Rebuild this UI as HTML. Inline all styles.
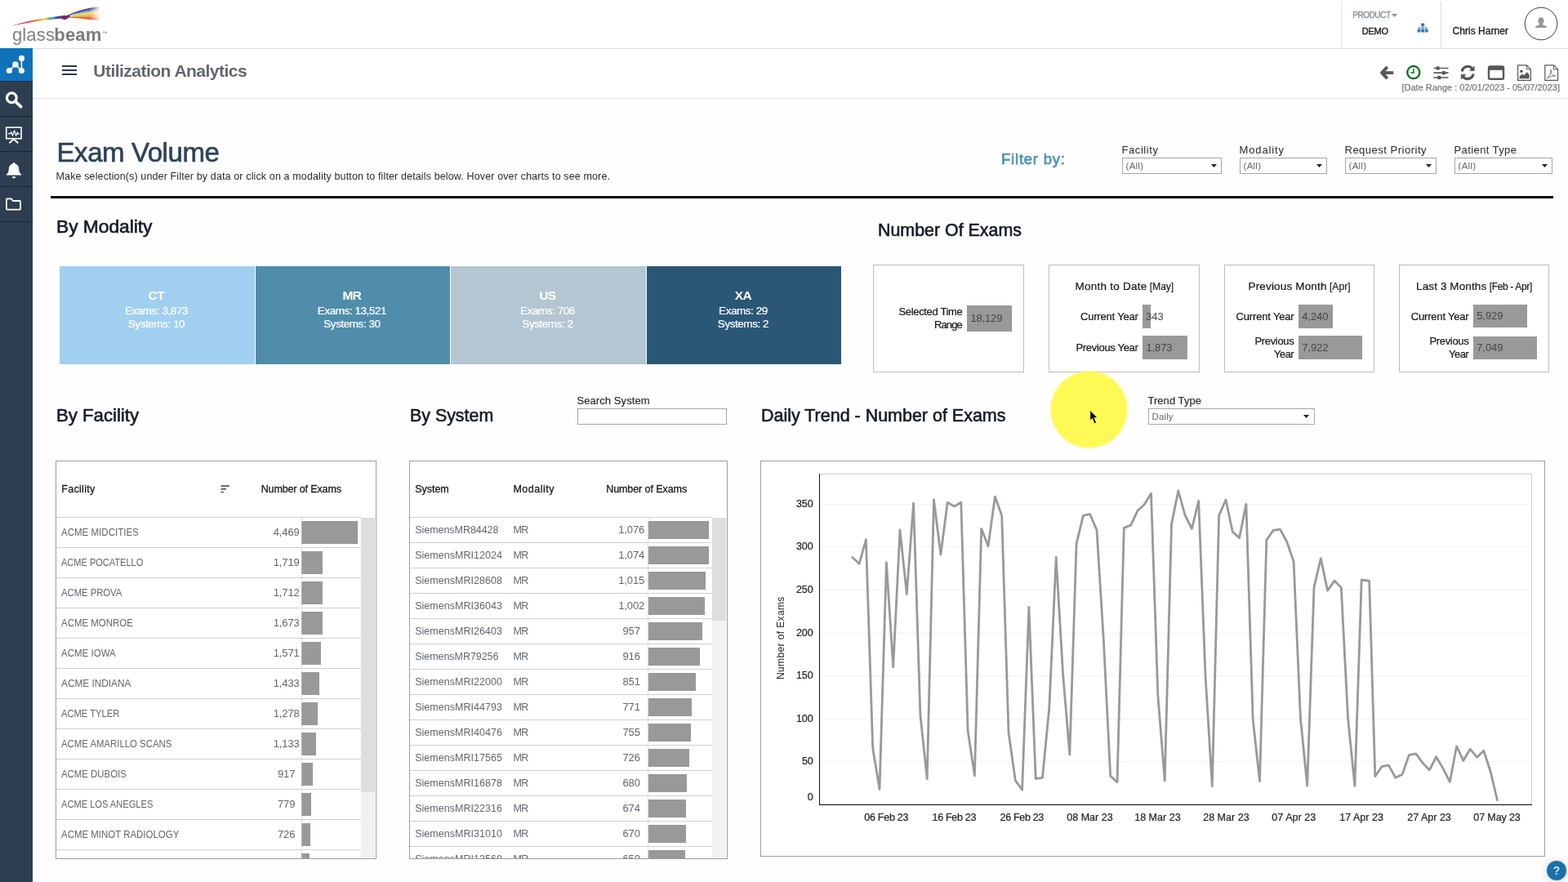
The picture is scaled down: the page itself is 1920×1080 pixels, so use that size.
<!DOCTYPE html>
<html lang="en"><head><meta charset="utf-8"><title>Utilization Analytics - Exam Volume</title>
<style>
html,body{margin:0;padding:0;}
body{width:1920px;height:1080px;overflow:hidden;background:#fff;position:relative;font-family:"Liberation Sans", sans-serif;}
div,span.t,svg,header,main,section,nav{position:absolute;box-sizing:border-box;display:block;}
span.t{white-space:pre;}

</style></head><body>
<div style="left:0;top:0;width:1920px;height:1080px;overflow:hidden;will-change:transform;">
<div style="left:0px;top:0px;width:1920px;height:1080px;background:#fefefe;"></div>
<header style="left:0;top:0;width:0;height:0;">
<div style="left:0px;top:0px;width:1920px;height:59px;background:#fff;"></div>
<div style="left:0px;top:59px;width:1920px;height:1px;background:#dcdcdc;"></div>
<div style="left:1642px;top:2px;width:1px;height:58px;background:#dedede;"></div>
<div style="left:1764px;top:2px;width:1px;height:58px;background:#dedede;"></div>
<svg style="left:8px;top:4px" width="124" height="34" viewBox="8 4 124 34">
<defs>
<linearGradient id="swa" gradientUnits="userSpaceOnUse" x1="12" y1="0" x2="82" y2="0"><stop offset="0" stop-color="#d23a55" stop-opacity="0.600"/><stop offset="0.15" stop-color="#d4364f"/><stop offset="0.34" stop-color="#dc4a44"/><stop offset="0.5" stop-color="#ee9a3c"/><stop offset="0.61" stop-color="#f3cf55"/><stop offset="0.69" stop-color="#63b05a"/><stop offset="0.76" stop-color="#3f9ccc"/><stop offset="0.84" stop-color="#3b3f8f"/><stop offset="0.94" stop-color="#7a2a5a"/><stop offset="1" stop-color="#8a2a4a"/></linearGradient>
<linearGradient id="swf" gradientUnits="userSpaceOnUse" x1="78" y1="0" x2="123" y2="0"><stop offset="0" stop-color="#fff" stop-opacity="1"/><stop offset="0.7" stop-color="#fff" stop-opacity="1"/><stop offset="1" stop-color="#fff" stop-opacity="0"/></linearGradient>
<mask id="swm" maskUnits="userSpaceOnUse" x="70" y="4" width="60" height="30"><rect x="70" y="4" width="60" height="30" fill="url(#swf)"/></mask>
<filter id="swb" x="-5%" y="-20%" width="110%" height="140%"><feGaussianBlur stdDeviation="0.400"/></filter>
</defs>
<g filter="url(#swb)">
<g mask="url(#swm)"><path d="M78 21 Q101 10.23 122.500 8.4 L122.500 10.0 Q101 12.08 78 21Z" fill="#4b2f86"/><path d="M78 21 Q101 12.08 122.500 10.0 L122.500 11.8 Q101 13.99 78 21Z" fill="#4a78c2"/><path d="M78 21 Q101 13.99 122.500 11.8 L122.500 13.6 Q101 15.71 78 21Z" fill="#86c4a4"/><path d="M78 21 Q101 15.71 122.500 13.6 L122.500 17.2 Q101 18.58 78 21Z" fill="#f3d45c"/><path d="M78 21 Q101 18.58 122.500 17.2 L122.500 21.2 Q101 20.89 78 21Z" fill="#f2a443"/><path d="M78 21 Q101 20.89 122.500 21.2 L122.500 25.6 Q101 22.35 78 21Z" fill="#e45a3a"/><path d="M79 20.600 Q101 10.23 122.500 8.400" fill="none" stroke="#3a2468" stroke-width="0.800"/></g>
<path d="M12.600 32.200 C30 26.200 54 21.800 80 18.800 L82 21.800 C58 24 32 27.600 12.600 32.200Z" fill="url(#swa)"/>
<path d="M74 22 L84.500 18.400 L86 20.200 L80.500 24 L78 24 Z" fill="#6a2668"/>
</g>
</svg>
<span class="t" style="top:32.00px;font-size:22px;line-height:22px;color:#828282;left:14.90px;letter-spacing:-0.081px;"><span style="letter-spacing:0.18px">glass</span><b style="color:#7c7c7c;margin-left:-0.800px;letter-spacing:0.150px">beam</b></span>
<span class="t" style="top:38.00px;font-size:6.4px;line-height:6.4px;color:#7a7a7a;font-weight:700;left:125.20px;">™</span>
<span class="t" style="top:14.00px;font-size:10px;line-height:10px;color:#8a919b;left:1656.30px;letter-spacing:-0.459px;-webkit-text-stroke:0.4px #8a919b;">PRODUCT</span>
<svg style="left:1703.5px;top:16.5px" width="7" height="4" viewBox="0 0 7 4"><path d="M0 0H7L3.5 4Z" fill="#8a919b"/></svg>
<span class="t" style="top:33.00px;font-size:11px;line-height:11px;color:#1d1d1d;left:1667.80px;letter-spacing:-0.267px;-webkit-text-stroke:0.4px #1d1d1d;">DEMO</span>
<svg style="left:1734.600px;top:27.600px" width="14.200" height="12.400" viewBox="0 0 16 14"><g fill="#3d7ab8"><rect x="5.7" y="0.6" width="4.6" height="4"/><rect x="0.6" y="8.6" width="4.4" height="4.4"/><rect x="5.8" y="8.6" width="4.4" height="4.4"/><rect x="11" y="8.6" width="4.4" height="4.4"/><rect x="7.5" y="4" width="1" height="5"/><rect x="2.3" y="6.3" width="11.4" height="1"/><rect x="2.3" y="6.3" width="1" height="3"/><rect x="12.7" y="6.3" width="1" height="3"/></g></svg>
<span class="t" style="top:32.00px;font-size:12px;line-height:12px;color:#1d1d1d;left:1778.50px;letter-spacing:0.044px;-webkit-text-stroke:0.35px #1d1d1d;">Chris Harner</span>
<svg style="left:1866px;top:8px" width="42" height="42" viewBox="0 0 42 42"><circle cx="21" cy="21" r="19.8" fill="#fff" stroke="#2a2a2a" stroke-width="0.9"/><path d="M21 13.2c2.3 0 3.6 1.7 3.6 4 0 1.7-.7 3.2-1.6 4 0 .9.5 1.4 1.6 1.8 2.4.8 3.6 1.5 3.6 3H13.8c0-1.5 1.2-2.2 3.6-3 1.1-.4 1.6-.9 1.6-1.8-.9-.8-1.6-2.3-1.6-4 0-2.3 1.3-4 3.6-4z" fill="#999"/></svg>
<nav style="left:0;top:0;width:0;height:0;">
<div style="left:0px;top:59px;width:40px;height:1021px;background:#2c3e50;"></div>
<div style="left:0px;top:59px;width:40px;height:40px;background:#0f73b9;"></div>
<div style="left:0px;top:99px;width:40px;height:1px;border-top:1px dotted #0a0f18;"></div>
<div style="left:0px;top:142px;width:40px;height:1px;border-top:1px dotted #0a0f18;"></div>
<div style="left:0px;top:185px;width:40px;height:1px;border-top:1px dotted #0a0f18;"></div>
<div style="left:0px;top:228px;width:40px;height:1px;border-top:1px dotted #0a0f18;"></div>
<div style="left:0px;top:271px;width:40px;height:1px;border-top:1px dotted #0a0f18;"></div>
<svg style="left:6px;top:65px" width="28" height="28" viewBox="6 65 28 28"><g stroke="#fff" stroke-width="1.500" fill="none"><path d="M11.400 86.600L18.900 79L26.400 86.600L26.500 71.500"/></g><g fill="#fff"><circle cx="26.500" cy="71.400" r="3.600"/><circle cx="18.900" cy="78.900" r="3.700"/><circle cx="11.400" cy="86.500" r="3.600"/><circle cx="26.400" cy="86.500" r="3.600"/></g></svg>
<svg style="left:4px;top:108px" width="30" height="30" viewBox="4 108 30 30"><circle cx="14.300" cy="119.700" r="5.900" fill="none" stroke="#fff" stroke-width="3.200"/><path d="M19.300 124.700L25.600 130.700" stroke="#fff" stroke-width="3.800" stroke-linecap="round"/></svg>
<svg style="left:5px;top:152px" width="26" height="26" viewBox="5 152 26 26"><g fill="none" stroke="#fff"><rect x="7.700" y="156" width="18.300" height="13.700" stroke-width="1.600"/><path d="M9.800 163.600H12.600L13.800 161.600L15.400 166.200L17.600 159.800L19.600 166.400L21.200 162L22.400 164.200H24" stroke-width="1.200" stroke-linejoin="round"/><path d="M16.800 170.400L11.400 175.200M16.800 170.400L22.200 175.200" stroke-width="1.900"/></g></svg>
<svg style="left:6px;top:197px" width="24" height="24" viewBox="6 197 24 24"><path d="M17 199c.9 0 1.5.6 1.5 1.4 3 .8 4.7 3.300 4.700 6.400 0 3.200.8 5.200 2.800 6.700v1H8v-1c2-1.500 2.800-3.500 2.800-6.700 0-3.100 1.700-5.600 4.700-6.400 0-.8.600-1.400 1.500-1.400z" fill="#fff"/><path d="M14.800 216.300h4.400c0 1.200-1 2.100-2.200 2.100s-2.200-.9-2.200-2.100z" fill="#fff"/></svg>
<svg style="left:5px;top:240px" width="26" height="22" viewBox="5 240 26 22"><path d="M8.600 243.400h5.200l2 2.600h8.200c.6 0 1 .4 1 1v8.600c0 .6-.4 1-1 1H8.900c-.6 0-1-.4-1-1v-11.200c0-.6.300-1 .7-1z" fill="none" stroke="#fff" stroke-width="1.800" stroke-linejoin="round"/></svg>
</nav>
<div style="left:40px;top:60px;width:1880px;height:60px;background:#fff;"></div>
<div style="left:40px;top:120px;width:1880px;height:1px;background:#e2e2e2;"></div>
<div style="left:76px;top:80px;width:18px;height:2px;background:#24395a;"></div>
<div style="left:76px;top:85px;width:18px;height:2px;background:#24395a;"></div>
<div style="left:76px;top:90px;width:18px;height:2px;background:#24395a;"></div>
<span class="t" style="top:76.00px;font-size:21px;line-height:21px;color:#63676e;font-weight:700;left:114.30px;letter-spacing:-0.523px;">Utilization Analytics</span>
<svg style="left:1686px;top:78px" width="228" height="22" viewBox="1686 78 228 22">
<path d="M1698.800 82L1692 89.100L1698.800 96.200M1692.500 89.100H1706.200" fill="none" stroke="#56575e" stroke-width="3.900" stroke-linejoin="round"/>
<circle cx="1730.800" cy="88.600" r="7.600" fill="#fff" stroke="#0b6e22" stroke-width="2.300"/>
<path d="M1731 84v5h-3.600" fill="none" stroke="#0b6e22" stroke-width="1.500"/>
<g stroke="#56575e" stroke-width="1.700"><path d="M1755.500 83.500H1773.500M1755.500 89.200H1773.500M1755.500 95H1773.500"/></g>
<g fill="#56575e"><rect x="1758.600" y="81.400" width="4" height="4.200"/><rect x="1765.800" y="87.100" width="4" height="4.200"/><rect x="1760.200" y="92.900" width="4" height="4.200"/></g>
<g fill="none" stroke="#56575e" stroke-width="3.300"><path d="M1790.300 87.500A7 7 0 0 1 1803 84.500"/><path d="M1804 90.500A7 7 0 0 1 1791.300 93.500"/></g>
<path d="M1805.500 80.500V87H1799Z" fill="#56575e"/><path d="M1788.800 97.500V91H1795.300Z" fill="#56575e"/>
<rect x="1823" y="81.500" width="18" height="15.200" rx="1.500" fill="none" stroke="#56575e" stroke-width="2.400"/><rect x="1822.800" y="81.300" width="18.400" height="4.600" fill="#56575e"/>
<path d="M1858.600 79.800H1869.300L1874.400 84.900V98.300H1858.600Z" fill="#fff" stroke="#56575e" stroke-width="1.200"/><path d="M1869.300 79.800V84.900H1874.400" fill="none" stroke="#56575e" stroke-width="1"/>
<circle cx="1863" cy="87.300" r="1.800" fill="#56575e"/><path d="M1860.600 96.300V93.500L1864 90.500L1866 92.300L1869.800 88.300L1872.600 91.600V96.300Z" fill="#56575e"/>
<path d="M1891.800 79.800H1902.500L1907.600 84.900V98.300H1891.800Z" fill="#fff" stroke="#56575e" stroke-width="1.200"/><path d="M1902.500 79.800V84.900H1907.600" fill="none" stroke="#56575e" stroke-width="1"/>
<path d="M1894.500 96c2.500-2.500 4.500-6 5-9.500.2-1.500-.9-1.700-1-.3-.2 2.500 2 6 6.300 7-3-.6-7.500.4-10.300 2.800z" fill="none" stroke="#666" stroke-width="0.9"/>
</svg>
<span class="t" style="top:102.00px;font-size:11px;line-height:11px;color:#707070;left:1716.50px;letter-spacing:-0.010px;-webkit-text-stroke:0.15px #707070;">[Date Range : 02/01/2023 - 05/07/2023]</span>
</header>
<main style="left:0;top:0;width:0;height:0;">
<section aria-label="Exam Volume" style="left:0;top:0;width:0;height:0;">
<span class="t" style="top:170.00px;font-size:33px;line-height:33px;color:#2e4159;left:69.50px;letter-spacing:-0.429px;-webkit-text-stroke:0.6px #2e4159;">Exam Volume</span>
<span class="t" style="top:210.00px;font-size:12.5px;line-height:12.5px;color:#2b2b2b;left:68.50px;letter-spacing:0.133px;">Make selection(s) under Filter by data or click on a modality button to filter details below. Hover over charts to see more.</span>
<div style="left:62px;top:240px;width:1840px;height:3px;background:#000;"></div>
<span class="t" style="top:186.00px;font-size:18.5px;line-height:18.5px;color:#4e95b8;left:1226.00px;letter-spacing:0.785px;-webkit-text-stroke:0.75px #4e95b8;">Filter by:</span>
<span class="t" style="top:177.00px;font-size:13px;line-height:13px;color:#2a2a2a;left:1373.50px;letter-spacing:0.578px;">Facility</span>
<div style="left:1374px;top:193px;width:122px;height:20px;background:#fff;border:1px solid #a6a6a6;"></div>
<span class="t" style="top:198.00px;font-size:11.5px;line-height:11.5px;color:#666;left:1378.60px;letter-spacing:0.237px;">(All)</span>
<svg style="left:1482.5px;top:201.2px" width="7" height="4" viewBox="0 0 7 4"><path d="M0 0H7L3.500 4Z" fill="#222"/></svg>
<span class="t" style="top:177.00px;font-size:13px;line-height:13px;color:#2a2a2a;left:1517.50px;letter-spacing:0.868px;">Modality</span>
<div style="left:1518px;top:193px;width:107px;height:20px;background:#fff;border:1px solid #a6a6a6;"></div>
<span class="t" style="top:198.00px;font-size:11.5px;line-height:11.5px;color:#666;left:1522.60px;letter-spacing:0.237px;">(All)</span>
<svg style="left:1611.5px;top:201.2px" width="7" height="4" viewBox="0 0 7 4"><path d="M0 0H7L3.500 4Z" fill="#222"/></svg>
<span class="t" style="top:177.00px;font-size:13px;line-height:13px;color:#2a2a2a;left:1646.50px;letter-spacing:0.501px;">Request Priority</span>
<div style="left:1647px;top:193px;width:112px;height:20px;background:#fff;border:1px solid #a6a6a6;"></div>
<span class="t" style="top:198.00px;font-size:11.5px;line-height:11.5px;color:#666;left:1651.60px;letter-spacing:0.237px;">(All)</span>
<svg style="left:1745.5px;top:201.2px" width="7" height="4" viewBox="0 0 7 4"><path d="M0 0H7L3.500 4Z" fill="#222"/></svg>
<span class="t" style="top:177.00px;font-size:13px;line-height:13px;color:#2a2a2a;left:1780.50px;letter-spacing:0.405px;">Patient Type</span>
<div style="left:1781px;top:193px;width:120px;height:20px;background:#fff;border:1px solid #a6a6a6;"></div>
<span class="t" style="top:198.00px;font-size:11.5px;line-height:11.5px;color:#666;left:1785.60px;letter-spacing:0.237px;">(All)</span>
<svg style="left:1887.5px;top:201.2px" width="7" height="4" viewBox="0 0 7 4"><path d="M0 0H7L3.500 4Z" fill="#222"/></svg>
<span class="t" style="top:267.00px;font-size:22.5px;line-height:22.5px;color:#141b26;left:69.00px;transform-origin:0 0;transform:scaleX(1.0103);-webkit-text-stroke:0.6px #141b26;">By Modality</span>
<div style="left:73px;top:326px;width:239px;height:120px;background:#a1cff0;"></div>
<span class="t" style="top:354.00px;font-size:15.5px;line-height:15.5px;color:#fff;font-weight:700;letter-spacing:-0.500px;left:181.61px;">CT</span>
<span class="t" style="top:374.00px;font-size:13.5px;line-height:13.5px;color:#fff;letter-spacing:-0.450px;left:152.90px;-webkit-text-stroke:0.2px #fff;">Exams: 3,873</span>
<span class="t" style="top:390.00px;font-size:13.5px;line-height:13.5px;color:#fff;letter-spacing:-0.450px;left:156.81px;-webkit-text-stroke:0.2px #fff;">Systems: 10</span>
<div style="left:313px;top:326px;width:238px;height:120px;background:#4f8dab;"></div>
<span class="t" style="top:354.00px;font-size:15.5px;line-height:15.5px;color:#fff;font-weight:700;letter-spacing:-0.500px;left:419.40px;">MR</span>
<span class="t" style="top:374.00px;font-size:13.5px;line-height:13.5px;color:#fff;letter-spacing:-0.450px;left:388.87px;-webkit-text-stroke:0.2px #fff;">Exams: 13,521</span>
<span class="t" style="top:390.00px;font-size:13.5px;line-height:13.5px;color:#fff;letter-spacing:-0.450px;left:396.31px;-webkit-text-stroke:0.2px #fff;">Systems: 30</span>
<div style="left:552px;top:326px;width:239px;height:120px;background:#b3c6d1;"></div>
<span class="t" style="top:354.00px;font-size:15.5px;line-height:15.5px;color:#fff;font-weight:700;letter-spacing:-0.500px;left:660.18px;">US</span>
<span class="t" style="top:374.00px;font-size:13.5px;line-height:13.5px;color:#fff;letter-spacing:-0.450px;left:637.08px;-webkit-text-stroke:0.2px #fff;">Exams: 706</span>
<span class="t" style="top:390.00px;font-size:13.5px;line-height:13.5px;color:#fff;letter-spacing:-0.450px;left:639.33px;-webkit-text-stroke:0.2px #fff;">Systems: 2</span>
<div style="left:792px;top:326px;width:238px;height:120px;background:#2b5777;"></div>
<span class="t" style="top:354.00px;font-size:15.5px;line-height:15.5px;color:#fff;font-weight:700;letter-spacing:-0.500px;left:899.68px;">XA</span>
<span class="t" style="top:374.00px;font-size:13.5px;line-height:13.5px;color:#fff;letter-spacing:-0.450px;left:880.11px;-webkit-text-stroke:0.2px #fff;">Exams: 29</span>
<span class="t" style="top:390.00px;font-size:13.5px;line-height:13.5px;color:#fff;letter-spacing:-0.450px;left:878.83px;-webkit-text-stroke:0.2px #fff;">Systems: 2</span>
</section>
<section aria-label="Number Of Exams" style="left:0;top:0;width:0;height:0;">
<span class="t" style="top:271.00px;font-size:22.5px;line-height:22.5px;color:#141b26;left:1074.50px;transform-origin:0 0;transform:scaleX(0.9511);-webkit-text-stroke:0.6px #141b26;">Number Of Exams</span>
<div style="left:1069px;top:324px;width:185px;height:132px;background:#fff;border:1px solid #bdbdbd;"></div>
<div style="left:1284px;top:324px;width:185px;height:132px;background:#fff;border:1px solid #bdbdbd;"></div>
<div style="left:1499px;top:324px;width:184px;height:132px;background:#fff;border:1px solid #bdbdbd;"></div>
<div style="left:1713px;top:324px;width:184px;height:132px;background:#fff;border:1px solid #bdbdbd;"></div>
<div style="left:1184px;top:374px;width:55px;height:31.6px;background:#999999;"></div>
<span class="t" style="top:375.00px;font-size:13px;line-height:13px;color:#151515;left:1100.50px;letter-spacing:-0.340px;-webkit-text-stroke:0.2px #151515;">Selected Time</span>
<span class="t" style="top:391.00px;font-size:13px;line-height:13px;color:#151515;left:1144.00px;letter-spacing:-0.878px;-webkit-text-stroke:0.2px #151515;">Range</span>
<span class="t" style="top:383.00px;font-size:13px;line-height:13px;color:#454545;left:1188.40px;letter-spacing:-0.153px;">18,129</span>
<span class="t" style="top:344.00px;font-size:13.5px;line-height:13.5px;color:#151515;left:1316.40px;letter-spacing:0.262px;-webkit-text-stroke:0.2px #151515;">Month to Date</span>
<span class="t" style="top:345.00px;font-size:12px;line-height:12px;color:#151515;left:1407.85px;-webkit-text-stroke:0.15px #151515;">[May]</span>
<div style="left:1399px;top:373px;width:10px;height:28.7px;background:#999999;"></div>
<div style="left:1399px;top:411px;width:55px;height:28.7px;background:#999999;"></div>
<span class="t" style="top:381.00px;font-size:13px;line-height:13px;color:#151515;left:1323.00px;letter-spacing:-0.200px;-webkit-text-stroke:0.2px #151515;">Current Year</span>
<span class="t" style="top:419.00px;font-size:13px;line-height:13px;color:#151515;left:1317.50px;letter-spacing:-0.328px;-webkit-text-stroke:0.2px #151515;">Previous Year</span>
<span class="t" style="top:381.00px;font-size:13px;line-height:13px;color:#454545;left:1403.00px;">343</span>
<span class="t" style="top:419.00px;font-size:13px;line-height:13px;color:#454545;left:1403.40px;letter-spacing:-0.112px;">1,873</span>
<span class="t" style="top:344.00px;font-size:13.5px;line-height:13.5px;color:#151515;left:1528.50px;letter-spacing:0.166px;-webkit-text-stroke:0.2px #151515;">Previous Month</span>
<span class="t" style="top:345.00px;font-size:12px;line-height:12px;color:#151515;left:1627.95px;letter-spacing:0.075px;-webkit-text-stroke:0.15px #151515;">[Apr]</span>
<div style="left:1590px;top:373px;width:42px;height:28.7px;background:#999999;"></div>
<div style="left:1590px;top:411px;width:78px;height:28.7px;background:#999999;"></div>
<span class="t" style="top:381.00px;font-size:13px;line-height:13px;color:#151515;left:1513.60px;letter-spacing:-0.173px;-webkit-text-stroke:0.2px #151515;">Current Year</span>
<span class="t" style="top:411.00px;font-size:13px;line-height:13px;color:#151515;left:1536.40px;letter-spacing:-0.325px;-webkit-text-stroke:0.2px #151515;">Previous</span>
<span class="t" style="top:427.00px;font-size:13px;line-height:13px;color:#151515;left:1560.00px;letter-spacing:-0.527px;-webkit-text-stroke:0.2px #151515;">Year</span>
<span class="t" style="top:381.00px;font-size:13px;line-height:13px;color:#454545;left:1594.20px;letter-spacing:-0.062px;">4,240</span>
<span class="t" style="top:419.00px;font-size:13px;line-height:13px;color:#454545;left:1594.20px;letter-spacing:-0.062px;">7,922</span>
<span class="t" style="top:344.00px;font-size:13.5px;line-height:13.5px;color:#151515;left:1734.10px;letter-spacing:0.107px;-webkit-text-stroke:0.2px #151515;">Last 3 Months</span>
<span class="t" style="top:345.00px;font-size:12px;line-height:12px;color:#151515;left:1823.69px;letter-spacing:-0.342px;-webkit-text-stroke:0.15px #151515;">[Feb - Apr]</span>
<div style="left:1804px;top:373px;width:66px;height:27.6px;background:#999999;"></div>
<div style="left:1804px;top:412px;width:78px;height:27.7px;background:#999999;"></div>
<span class="t" style="top:381.00px;font-size:13px;line-height:13px;color:#151515;left:1727.80px;letter-spacing:-0.191px;-webkit-text-stroke:0.2px #151515;">Current Year</span>
<span class="t" style="top:411.00px;font-size:13px;line-height:13px;color:#151515;left:1750.40px;letter-spacing:-0.325px;-webkit-text-stroke:0.2px #151515;">Previous</span>
<span class="t" style="top:427.00px;font-size:13px;line-height:13px;color:#151515;left:1774.00px;letter-spacing:-0.527px;-webkit-text-stroke:0.2px #151515;">Year</span>
<span class="t" style="top:380.00px;font-size:13px;line-height:13px;color:#454545;left:1808.20px;letter-spacing:-0.062px;">5,929</span>
<span class="t" style="top:419.00px;font-size:13px;line-height:13px;color:#454545;left:1808.20px;letter-spacing:-0.062px;">7,049</span>
</section>
<section aria-label="By Facility and By System" style="left:0;top:0;width:0;height:0;">
<span class="t" style="top:498.00px;font-size:22.5px;line-height:22.5px;color:#141b26;left:68.80px;transform-origin:0 0;transform:scaleX(0.9852);-webkit-text-stroke:0.6px #141b26;">By Facility</span>
<span class="t" style="top:498.00px;font-size:22.5px;line-height:22.5px;color:#141b26;left:501.50px;transform-origin:0 0;transform:scaleX(0.9504);-webkit-text-stroke:0.6px #141b26;">By System</span>
<span class="t" style="top:498.00px;font-size:22.5px;line-height:22.5px;color:#141b26;left:931.50px;transform-origin:0 0;transform:scaleX(0.9542);-webkit-text-stroke:0.6px #141b26;">Daily Trend - Number of Exams</span>
<span class="t" style="top:484.00px;font-size:13px;line-height:13px;color:#2a2a2a;left:706.40px;letter-spacing:0.095px;-webkit-text-stroke:0.15px #2a2a2a;">Search System</span>
<div style="left:707px;top:500px;width:183px;height:20px;background:#fff;border:1px solid #a6a6a6;"></div>
<span class="t" style="top:484.00px;font-size:13px;line-height:13px;color:#2a2a2a;left:1405.40px;letter-spacing:0.061px;-webkit-text-stroke:0.15px #2a2a2a;">Trend Type</span>
<div style="left:1406px;top:500px;width:204px;height:20px;background:#fff;border:1px solid #a6a6a6;"></div>
<span class="t" style="top:505.00px;font-size:11.5px;line-height:11.5px;color:#666;left:1410.60px;letter-spacing:0.109px;">Daily</span>
<svg style="left:1596px;top:508.2px" width="7" height="4" viewBox="0 0 7 4"><path d="M0 0H7L3.500 4Z" fill="#222"/></svg>
<div style="left:68px;top:564px;width:393px;height:488px;background:#fff;border:1px solid #9e9e9e;"></div>
<span class="t" style="top:593.00px;font-size:12.5px;line-height:12.5px;color:#1a1a1a;left:75.20px;letter-spacing:0.313px;-webkit-text-stroke:0.3px #1a1a1a;">Facility</span>
<svg style="left:270px;top:593px" width="12" height="12" viewBox="0 0 12 12"><g fill="#555"><rect x="0.500" y="1.200" width="10.500" height="1.700"/><rect x="0.500" y="5" width="6.500" height="1.700"/><rect x="0.500" y="8.800" width="3.300" height="1.700"/></g></svg>
<span class="t" style="top:593.00px;font-size:12.5px;line-height:12.5px;color:#1a1a1a;left:319.70px;letter-spacing:-0.124px;-webkit-text-stroke:0.3px #1a1a1a;">Number of Exams</span>
<div style="left:442px;top:634px;width:17px;height:417px;background:#f1f1f1;"></div>
<div style="left:442px;top:634px;width:17px;height:336px;background:#dedede;"></div>
<div style="left:69px;top:565px;width:391px;height:486px;overflow:hidden;">
<div style="left:0;top:68px;width:373px;height:1px;background:#cfcfcf;"></div>
<div style="left:300.200px;top:73px;width:68.5px;height:27.500px;background:#999;"></div>
<div style="left:0;top:105px;width:373px;height:1px;background:#cfcfcf;"></div>
<div style="left:300.200px;top:110px;width:26.3px;height:27.500px;background:#999;"></div>
<div style="left:0;top:142px;width:373px;height:1px;background:#cfcfcf;"></div>
<div style="left:300.200px;top:147px;width:26.2px;height:27.500px;background:#999;"></div>
<div style="left:0;top:179px;width:373px;height:1px;background:#cfcfcf;"></div>
<div style="left:300.200px;top:184px;width:25.6px;height:27.500px;background:#999;"></div>
<div style="left:0;top:216px;width:373px;height:1px;background:#cfcfcf;"></div>
<div style="left:300.200px;top:221px;width:24.1px;height:27.500px;background:#999;"></div>
<div style="left:0;top:253px;width:373px;height:1px;background:#cfcfcf;"></div>
<div style="left:300.200px;top:258px;width:22.0px;height:27.500px;background:#999;"></div>
<div style="left:0;top:290px;width:373px;height:1px;background:#cfcfcf;"></div>
<div style="left:300.200px;top:295px;width:19.6px;height:27.500px;background:#999;"></div>
<div style="left:0;top:327px;width:373px;height:1px;background:#cfcfcf;"></div>
<div style="left:300.200px;top:332px;width:17.4px;height:27.500px;background:#999;"></div>
<div style="left:0;top:364px;width:373px;height:1px;background:#cfcfcf;"></div>
<div style="left:300.200px;top:369px;width:14.1px;height:27.500px;background:#999;"></div>
<div style="left:0;top:401px;width:373px;height:1px;background:#cfcfcf;"></div>
<div style="left:300.200px;top:406px;width:11.9px;height:27.500px;background:#999;"></div>
<div style="left:0;top:438px;width:373px;height:1px;background:#cfcfcf;"></div>
<div style="left:300.200px;top:443px;width:11.1px;height:27.500px;background:#999;"></div>
<div style="left:0;top:475px;width:373px;height:1px;background:#cfcfcf;"></div>
<div style="left:300.200px;top:480px;width:10.0px;height:27.500px;background:#999;"></div>
<div style="left:299.500px;top:68px;width:0;height:420px;border-left:1px dotted #c4c4c4;"></div>
</div>
<div style="left:0;top:0;width:1920px;height:1051px;overflow:hidden;">
<span class="t" style="top:645.00px;font-size:13px;line-height:13px;color:#62666c;left:75.00px;transform-origin:0 0;transform:scaleX(0.8868);">ACME MIDCITIES</span>
<span class="t" style="top:645.00px;font-size:13px;line-height:13px;color:#62666c;letter-spacing:-0.100px;left:334.63px;">4,469</span>
<span class="t" style="top:682.00px;font-size:13px;line-height:13px;color:#62666c;left:75.00px;transform-origin:0 0;transform:scaleX(0.8483);">ACME POCATELLO</span>
<span class="t" style="top:682.00px;font-size:13px;line-height:13px;color:#62666c;letter-spacing:-0.100px;left:334.63px;">1,719</span>
<span class="t" style="top:719.00px;font-size:13px;line-height:13px;color:#62666c;left:75.00px;transform-origin:0 0;transform:scaleX(0.8668);">ACME PROVA</span>
<span class="t" style="top:719.00px;font-size:13px;line-height:13px;color:#62666c;letter-spacing:-0.100px;left:334.63px;">1,712</span>
<span class="t" style="top:756.00px;font-size:13px;line-height:13px;color:#62666c;left:75.00px;transform-origin:0 0;transform:scaleX(0.8809);">ACME MONROE</span>
<span class="t" style="top:756.00px;font-size:13px;line-height:13px;color:#62666c;letter-spacing:-0.100px;left:334.63px;">1,673</span>
<span class="t" style="top:793.00px;font-size:13px;line-height:13px;color:#62666c;left:75.00px;transform-origin:0 0;transform:scaleX(0.8864);">ACME IOWA</span>
<span class="t" style="top:793.00px;font-size:13px;line-height:13px;color:#62666c;letter-spacing:-0.100px;left:334.63px;">1,571</span>
<span class="t" style="top:830.00px;font-size:13px;line-height:13px;color:#62666c;left:75.00px;transform-origin:0 0;transform:scaleX(0.9084);">ACME INDIANA</span>
<span class="t" style="top:830.00px;font-size:13px;line-height:13px;color:#62666c;letter-spacing:-0.100px;left:334.63px;">1,433</span>
<span class="t" style="top:867.00px;font-size:13px;line-height:13px;color:#62666c;left:75.00px;transform-origin:0 0;transform:scaleX(0.8607);">ACME TYLER</span>
<span class="t" style="top:867.00px;font-size:13px;line-height:13px;color:#62666c;letter-spacing:-0.100px;left:334.63px;">1,278</span>
<span class="t" style="top:904.00px;font-size:13px;line-height:13px;color:#62666c;left:75.00px;transform-origin:0 0;transform:scaleX(0.8751);">ACME AMARILLO SCANS</span>
<span class="t" style="top:904.00px;font-size:13px;line-height:13px;color:#62666c;letter-spacing:-0.100px;left:334.63px;">1,133</span>
<span class="t" style="top:941.00px;font-size:13px;line-height:13px;color:#62666c;left:75.00px;transform-origin:0 0;transform:scaleX(0.8768);">ACME DUBOIS</span>
<span class="t" style="top:941.00px;font-size:13px;line-height:13px;color:#62666c;letter-spacing:-0.100px;left:339.95px;">917</span>
<span class="t" style="top:978.00px;font-size:13px;line-height:13px;color:#62666c;left:75.00px;transform-origin:0 0;transform:scaleX(0.8540);">ACME LOS ANEGLES</span>
<span class="t" style="top:978.00px;font-size:13px;line-height:13px;color:#62666c;letter-spacing:-0.100px;left:339.95px;">779</span>
<span class="t" style="top:1015.00px;font-size:13px;line-height:13px;color:#62666c;left:75.00px;transform-origin:0 0;transform:scaleX(0.8813);">ACME MINOT RADIOLOGY</span>
<span class="t" style="top:1015.00px;font-size:13px;line-height:13px;color:#62666c;letter-spacing:-0.100px;left:339.95px;">726</span>
</div>
<div style="left:501px;top:564px;width:390px;height:488px;background:#fff;border:1px solid #9e9e9e;"></div>
<span class="t" style="top:593.00px;font-size:12.5px;line-height:12.5px;color:#1a1a1a;left:508.20px;letter-spacing:-0.018px;-webkit-text-stroke:0.3px #1a1a1a;">System</span>
<span class="t" style="top:593.00px;font-size:12.5px;line-height:12.5px;color:#1a1a1a;left:628.40px;letter-spacing:0.522px;-webkit-text-stroke:0.3px #1a1a1a;">Modality</span>
<span class="t" style="top:593.00px;font-size:12.5px;line-height:12.5px;color:#1a1a1a;left:742.20px;letter-spacing:-0.074px;-webkit-text-stroke:0.3px #1a1a1a;">Number of Exams</span>
<div style="left:872px;top:634px;width:17px;height:417px;background:#f1f1f1;"></div>
<div style="left:872px;top:634px;width:17px;height:126px;background:#dedede;"></div>
<div style="left:502px;top:565px;width:388px;height:486px;overflow:hidden;">
<div style="left:0;top:68px;width:370px;height:1px;background:#cfcfcf;"></div>
<div style="left:292px;top:72.7px;width:73.7px;height:22.500px;background:#999;"></div>
<div style="left:0;top:99px;width:370px;height:1px;background:#cfcfcf;"></div>
<div style="left:292px;top:103.7px;width:73.6px;height:22.500px;background:#999;"></div>
<div style="left:0;top:130px;width:370px;height:1px;background:#cfcfcf;"></div>
<div style="left:292px;top:134.7px;width:69.5px;height:22.500px;background:#999;"></div>
<div style="left:0;top:161px;width:370px;height:1px;background:#cfcfcf;"></div>
<div style="left:292px;top:165.7px;width:68.6px;height:22.500px;background:#999;"></div>
<div style="left:0;top:192px;width:370px;height:1px;background:#cfcfcf;"></div>
<div style="left:292px;top:196.7px;width:65.5px;height:22.500px;background:#999;"></div>
<div style="left:0;top:223px;width:370px;height:1px;background:#cfcfcf;"></div>
<div style="left:292px;top:227.7px;width:62.7px;height:22.500px;background:#999;"></div>
<div style="left:0;top:254px;width:370px;height:1px;background:#cfcfcf;"></div>
<div style="left:292px;top:258.7px;width:58.3px;height:22.500px;background:#999;"></div>
<div style="left:0;top:285px;width:370px;height:1px;background:#cfcfcf;"></div>
<div style="left:292px;top:289.7px;width:52.8px;height:22.500px;background:#999;"></div>
<div style="left:0;top:316px;width:370px;height:1px;background:#cfcfcf;"></div>
<div style="left:292px;top:320.7px;width:51.7px;height:22.500px;background:#999;"></div>
<div style="left:0;top:347px;width:370px;height:1px;background:#cfcfcf;"></div>
<div style="left:292px;top:351.7px;width:49.7px;height:22.500px;background:#999;"></div>
<div style="left:0;top:378px;width:370px;height:1px;background:#cfcfcf;"></div>
<div style="left:292px;top:382.7px;width:46.6px;height:22.500px;background:#999;"></div>
<div style="left:0;top:409px;width:370px;height:1px;background:#cfcfcf;"></div>
<div style="left:292px;top:413.7px;width:46.2px;height:22.500px;background:#999;"></div>
<div style="left:0;top:440px;width:370px;height:1px;background:#cfcfcf;"></div>
<div style="left:292px;top:444.7px;width:45.9px;height:22.500px;background:#999;"></div>
<div style="left:0;top:471px;width:370px;height:1px;background:#cfcfcf;"></div>
<div style="left:292px;top:475.7px;width:44.5px;height:22.500px;background:#999;"></div>
<div style="left:291px;top:68px;width:0;height:420px;border-left:1px dotted #c4c4c4;"></div>
</div>
<div style="left:0;top:0;width:1920px;height:1051px;overflow:hidden;">
<span class="t" style="top:643.00px;font-size:12.5px;line-height:12.5px;color:#62666c;left:508.20px;letter-spacing:-0.042px;">SiemensMR84428</span>
<span class="t" style="top:643.00px;font-size:12.5px;line-height:12.5px;color:#62666c;left:628.40px;letter-spacing:-0.653px;">MR</span>
<span class="t" style="top:642.00px;font-size:13px;line-height:13px;color:#62666c;letter-spacing:-0.100px;left:757.13px;">1,076</span>
<span class="t" style="top:674.00px;font-size:12.5px;line-height:12.5px;color:#62666c;left:508.20px;letter-spacing:0.035px;">SiemensMRI12024</span>
<span class="t" style="top:674.00px;font-size:12.5px;line-height:12.5px;color:#62666c;left:628.40px;letter-spacing:-0.653px;">MR</span>
<span class="t" style="top:673.00px;font-size:13px;line-height:13px;color:#62666c;letter-spacing:-0.100px;left:757.13px;">1,074</span>
<span class="t" style="top:705.00px;font-size:12.5px;line-height:12.5px;color:#62666c;left:508.20px;letter-spacing:0.035px;">SiemensMRI28608</span>
<span class="t" style="top:705.00px;font-size:12.5px;line-height:12.5px;color:#62666c;left:628.40px;letter-spacing:-0.653px;">MR</span>
<span class="t" style="top:704.00px;font-size:13px;line-height:13px;color:#62666c;letter-spacing:-0.100px;left:757.13px;">1,015</span>
<span class="t" style="top:736.00px;font-size:12.5px;line-height:12.5px;color:#62666c;left:508.20px;letter-spacing:0.035px;">SiemensMRI36043</span>
<span class="t" style="top:736.00px;font-size:12.5px;line-height:12.5px;color:#62666c;left:628.40px;letter-spacing:-0.653px;">MR</span>
<span class="t" style="top:735.00px;font-size:13px;line-height:13px;color:#62666c;letter-spacing:-0.100px;left:757.13px;">1,002</span>
<span class="t" style="top:767.00px;font-size:12.5px;line-height:12.5px;color:#62666c;left:508.20px;letter-spacing:0.035px;">SiemensMRI26403</span>
<span class="t" style="top:767.00px;font-size:12.5px;line-height:12.5px;color:#62666c;left:628.40px;letter-spacing:-0.653px;">MR</span>
<span class="t" style="top:766.00px;font-size:13px;line-height:13px;color:#62666c;letter-spacing:-0.100px;left:762.45px;">957</span>
<span class="t" style="top:798.00px;font-size:12.5px;line-height:12.5px;color:#62666c;left:508.20px;letter-spacing:-0.042px;">SiemensMR79256</span>
<span class="t" style="top:798.00px;font-size:12.5px;line-height:12.5px;color:#62666c;left:628.40px;letter-spacing:-0.653px;">MR</span>
<span class="t" style="top:797.00px;font-size:13px;line-height:13px;color:#62666c;letter-spacing:-0.100px;left:762.45px;">916</span>
<span class="t" style="top:829.00px;font-size:12.5px;line-height:12.5px;color:#62666c;left:508.20px;letter-spacing:0.035px;">SiemensMRI22000</span>
<span class="t" style="top:829.00px;font-size:12.5px;line-height:12.5px;color:#62666c;left:628.40px;letter-spacing:-0.653px;">MR</span>
<span class="t" style="top:828.00px;font-size:13px;line-height:13px;color:#62666c;letter-spacing:-0.100px;left:762.45px;">851</span>
<span class="t" style="top:860.00px;font-size:12.5px;line-height:12.5px;color:#62666c;left:508.20px;letter-spacing:0.035px;">SiemensMRI44793</span>
<span class="t" style="top:860.00px;font-size:12.5px;line-height:12.5px;color:#62666c;left:628.40px;letter-spacing:-0.653px;">MR</span>
<span class="t" style="top:859.00px;font-size:13px;line-height:13px;color:#62666c;letter-spacing:-0.100px;left:762.45px;">771</span>
<span class="t" style="top:891.00px;font-size:12.5px;line-height:12.5px;color:#62666c;left:508.20px;letter-spacing:0.035px;">SiemensMRI40476</span>
<span class="t" style="top:891.00px;font-size:12.5px;line-height:12.5px;color:#62666c;left:628.40px;letter-spacing:-0.653px;">MR</span>
<span class="t" style="top:890.00px;font-size:13px;line-height:13px;color:#62666c;letter-spacing:-0.100px;left:762.45px;">755</span>
<span class="t" style="top:922.00px;font-size:12.5px;line-height:12.5px;color:#62666c;left:508.20px;letter-spacing:0.035px;">SiemensMRI17565</span>
<span class="t" style="top:922.00px;font-size:12.5px;line-height:12.5px;color:#62666c;left:628.40px;letter-spacing:-0.653px;">MR</span>
<span class="t" style="top:921.00px;font-size:13px;line-height:13px;color:#62666c;letter-spacing:-0.100px;left:762.45px;">726</span>
<span class="t" style="top:953.00px;font-size:12.5px;line-height:12.5px;color:#62666c;left:508.20px;letter-spacing:0.035px;">SiemensMRI16878</span>
<span class="t" style="top:953.00px;font-size:12.5px;line-height:12.5px;color:#62666c;left:628.40px;letter-spacing:-0.653px;">MR</span>
<span class="t" style="top:952.00px;font-size:13px;line-height:13px;color:#62666c;letter-spacing:-0.100px;left:762.45px;">680</span>
<span class="t" style="top:984.00px;font-size:12.5px;line-height:12.5px;color:#62666c;left:508.20px;letter-spacing:0.035px;">SiemensMRI22316</span>
<span class="t" style="top:984.00px;font-size:12.5px;line-height:12.5px;color:#62666c;left:628.40px;letter-spacing:-0.653px;">MR</span>
<span class="t" style="top:983.00px;font-size:13px;line-height:13px;color:#62666c;letter-spacing:-0.100px;left:762.45px;">674</span>
<span class="t" style="top:1015.00px;font-size:12.5px;line-height:12.5px;color:#62666c;left:508.20px;letter-spacing:0.035px;">SiemensMRI31010</span>
<span class="t" style="top:1015.00px;font-size:12.5px;line-height:12.5px;color:#62666c;left:628.40px;letter-spacing:-0.653px;">MR</span>
<span class="t" style="top:1014.00px;font-size:13px;line-height:13px;color:#62666c;letter-spacing:-0.100px;left:762.45px;">670</span>
<span class="t" style="top:1046.00px;font-size:12.5px;line-height:12.5px;color:#62666c;left:508.20px;letter-spacing:0.035px;">SiemensMRI13560</span>
<span class="t" style="top:1046.00px;font-size:12.5px;line-height:12.5px;color:#62666c;left:628.40px;letter-spacing:-0.653px;">MR</span>
<span class="t" style="top:1045.00px;font-size:13px;line-height:13px;color:#62666c;letter-spacing:-0.100px;left:762.45px;">650</span>
</div>
</section>
<section aria-label="Daily Trend" style="left:0;top:0;width:0;height:0;">
<div style="left:931px;top:564px;width:961px;height:485px;background:#fff;border:1px solid #9e9e9e;"></div>
<svg style="left:932px;top:565px" width="959" height="483" viewBox="932 565 959 483">
<rect x="1003.500" y="580.500" width="872" height="404.500" fill="#fff" stroke="#cfcfcf" stroke-width="1"/>
<path d="M1004 617.5H1873.500" stroke="#f2f2f2" stroke-width="1"/><path d="M1004 669.5H1873.500" stroke="#f2f2f2" stroke-width="1"/><path d="M1004 722.5H1873.500" stroke="#f2f2f2" stroke-width="1"/><path d="M1004 775.5H1873.500" stroke="#f2f2f2" stroke-width="1"/><path d="M1004 827.5H1873.500" stroke="#f2f2f2" stroke-width="1"/><path d="M1004 880.5H1873.500" stroke="#f2f2f2" stroke-width="1"/><path d="M1004 932.5H1873.500" stroke="#f2f2f2" stroke-width="1"/>
<polyline points="1043.8,682.5 1052.1,690.3 1060.4,660.6 1068.7,916.1 1077.0,966.3 1085.4,688.8 1093.7,816.6 1102.0,648.9 1110.3,727.7 1118.6,616.2 1126.9,875.3 1135.2,953.7 1143.5,612.0 1151.9,679.0 1160.2,615.3 1168.5,620.1 1176.8,615.3 1185.1,894.7 1193.4,949.6 1201.7,647.3 1210.0,668.7 1218.4,608.1 1226.7,631.4 1235.0,896.7 1243.3,955.6 1251.6,967.3 1259.9,743.4 1268.2,953.5 1276.5,952.3 1284.8,866.5 1293.2,682.4 1301.5,824.0 1309.8,923.9 1318.1,665.6 1326.4,631.4 1334.7,629.5 1343.0,649.3 1351.3,783.0 1359.7,950.2 1368.0,957.6 1376.3,646.4 1384.6,643.1 1392.9,625.6 1401.2,617.8 1409.5,604.2 1417.8,851.0 1426.2,956.0 1434.5,642.1 1442.8,600.9 1451.1,631.0 1459.4,647.5 1467.7,613.3 1476.0,827.0 1484.3,962.8 1492.6,631.4 1501.0,612.0 1509.3,651.2 1517.6,658.6 1525.9,617.4 1534.2,881.1 1542.5,956.6 1550.8,661.5 1559.1,649.3 1567.5,648.1 1575.8,663.5 1584.1,687.8 1592.4,879.2 1600.7,962.0 1609.0,719.3 1617.3,683.9 1625.6,723.2 1634.0,711.1 1642.3,719.5 1650.6,880.2 1658.9,962.4 1667.2,709.8 1676.7,711.5 1683.8,950.6 1692.1,938.5 1700.4,937.1 1708.8,952.3 1717.1,948.2 1725.4,924.5 1733.7,922.9 1742.0,934.2 1750.3,942.8 1758.6,926.8 1766.9,940.8 1775.3,957.4 1783.6,913.8 1791.9,931.3 1800.2,917.3 1808.5,927.2 1816.8,919.2 1825.1,944.7 1833.4,979.7" fill="none" stroke="#999" stroke-width="2.800" stroke-linejoin="round" stroke-linecap="round"/>
<path d="M1003.500 580V986" stroke="#111" stroke-width="1"/>
<path d="M1003 985.500H1876" stroke="#111" stroke-width="1"/>
</svg>
<span class="t" style="top:611.00px;font-size:12.5px;line-height:12.5px;color:#222;left:975.05px;letter-spacing:-0.155px;-webkit-text-stroke:0.2px #222;">350</span>
<span class="t" style="top:663.00px;font-size:12.5px;line-height:12.5px;color:#222;left:975.05px;letter-spacing:-0.155px;-webkit-text-stroke:0.2px #222;">300</span>
<span class="t" style="top:716.00px;font-size:12.5px;line-height:12.5px;color:#222;left:975.05px;letter-spacing:-0.155px;-webkit-text-stroke:0.2px #222;">250</span>
<span class="t" style="top:769.00px;font-size:12.5px;line-height:12.5px;color:#222;left:975.05px;letter-spacing:-0.155px;-webkit-text-stroke:0.2px #222;">200</span>
<span class="t" style="top:821.00px;font-size:12.5px;line-height:12.5px;color:#222;left:975.05px;letter-spacing:-0.155px;-webkit-text-stroke:0.2px #222;">150</span>
<span class="t" style="top:874.00px;font-size:12.5px;line-height:12.5px;color:#222;left:975.05px;letter-spacing:-0.155px;-webkit-text-stroke:0.2px #222;">100</span>
<span class="t" style="top:926.00px;font-size:12.5px;line-height:12.5px;color:#222;left:981.90px;letter-spacing:-0.206px;-webkit-text-stroke:0.2px #222;">50</span>
<span class="t" style="top:970.00px;font-size:12.5px;line-height:12.5px;color:#222;left:988.75px;letter-spacing:-0.103px;-webkit-text-stroke:0.2px #222;">0</span>
<span class="t" style="top:995.00px;font-size:12.5px;line-height:12.5px;color:#222;left:1058.30px;letter-spacing:-0.275px;-webkit-text-stroke:0.2px #222;">06 Feb 23</span>
<span class="t" style="top:995.00px;font-size:12.5px;line-height:12.5px;color:#222;left:1141.50px;letter-spacing:-0.300px;-webkit-text-stroke:0.2px #222;">16 Feb 23</span>
<span class="t" style="top:995.00px;font-size:12.5px;line-height:12.5px;color:#222;left:1224.50px;letter-spacing:-0.312px;-webkit-text-stroke:0.2px #222;">26 Feb 23</span>
<span class="t" style="top:995.00px;font-size:12.5px;line-height:12.5px;color:#222;left:1306.30px;-webkit-text-stroke:0.2px #222;">08 Mar 23</span>
<span class="t" style="top:995.00px;font-size:12.5px;line-height:12.5px;color:#222;left:1389.20px;letter-spacing:0.015px;-webkit-text-stroke:0.2px #222;">18 Mar 23</span>
<span class="t" style="top:995.00px;font-size:12.5px;line-height:12.5px;color:#222;left:1473.20px;letter-spacing:0.015px;-webkit-text-stroke:0.2px #222;">28 Mar 23</span>
<span class="t" style="top:995.00px;font-size:12.5px;line-height:12.5px;color:#222;left:1557.30px;letter-spacing:0.048px;-webkit-text-stroke:0.2px #222;">07 Apr 23</span>
<span class="t" style="top:995.00px;font-size:12.5px;line-height:12.5px;color:#222;left:1640.30px;letter-spacing:0.011px;-webkit-text-stroke:0.2px #222;">17 Apr 23</span>
<span class="t" style="top:995.00px;font-size:12.5px;line-height:12.5px;color:#222;left:1723.20px;letter-spacing:0.011px;-webkit-text-stroke:0.2px #222;">27 Apr 23</span>
<span class="t" style="top:995.00px;font-size:12.5px;line-height:12.5px;color:#222;left:1804.30px;letter-spacing:-0.109px;-webkit-text-stroke:0.2px #222;">07 May 23</span>
<span class="t" style="left:950px;top:831.500px;font-size:12px;line-height:12px;color:#222;transform-origin:0 0;transform:rotate(-90deg);white-space:pre;letter-spacing:0.38px;">Number of Exams</span>
</section>
</main>
<div style="left:1285px;top:452.5px;width:97px;height:97px;border-radius:50%;background:radial-gradient(circle closest-side, #fff955 0, #fff955 93%, rgba(255,249,85,0.55) 97%, rgba(255,249,85,0) 100%);"></div>
<svg style="left:1333px;top:501px" width="14" height="20" viewBox="-2 -1.800 14 20"><path d="M0 0V11.700L2.600 9.400L5.300 15.600L7.300 14.800L4.700 8.700L8.300 8.400Z" fill="#050505" stroke="#fffbe0" stroke-width="0.400"/></svg>
<div style="left:1893.8px;top:1054px;width:24px;height:24px;border-radius:50%;background:#1e6fa8;box-shadow:0 0 0 1px #dcecf8, 0 1px 9px 2px rgba(0,0,0,0.130);"></div>
<span class="t" style="top:1059.00px;font-size:14px;line-height:14px;color:#c6e3fb;font-weight:700;left:1901.72px;">?</span>
</div>
</body></html>
